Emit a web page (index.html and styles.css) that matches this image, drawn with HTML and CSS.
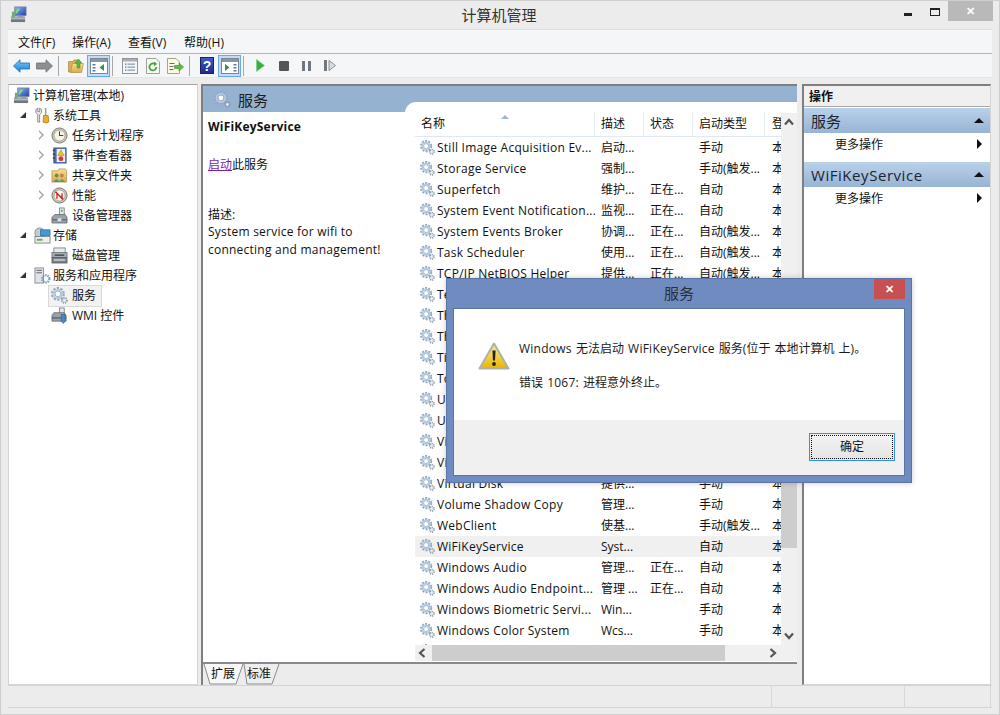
FILE: index.html
```html
<!DOCTYPE html>
<html lang="zh-CN">
<head>
<meta charset="utf-8">
<title>计算机管理</title>
<link rel="stylesheet" href="styles.css">
</head>
<body>
<svg class="defs" width="0" height="0">
  <defs>
    <linearGradient id="gScreen" x1="0" y1="0" x2="1" y2="1"><stop offset="0" stop-color="#8fb8f0"/><stop offset="1" stop-color="#1f3fb0"/></linearGradient>
    <linearGradient id="gFolder" x1="0" y1="0" x2="0" y2="1"><stop offset="0" stop-color="#f8df90"/><stop offset="1" stop-color="#dca94a"/></linearGradient>
    <linearGradient id="gArrow" x1="0" y1="0" x2="0" y2="1"><stop offset="0" stop-color="#7cc6f5"/><stop offset="1" stop-color="#1f7fd6"/></linearGradient>
    <linearGradient id="gWarn" x1="0" y1="0" x2="0" y2="1"><stop offset="0" stop-color="#fdf08a"/><stop offset="1" stop-color="#e9b400"/></linearGradient>
    <linearGradient id="gHelp" x1="0" y1="0" x2="0" y2="1"><stop offset="0" stop-color="#3f5cc8"/><stop offset="1" stop-color="#1d2c8c"/></linearGradient>
    <symbol id="gear" viewBox="0 0 16 16">
      <circle cx="6.5" cy="6.5" r="5.2" fill="none" stroke="#8fa9c4" stroke-width="2.6" stroke-dasharray="2 1.27"/>
      <circle cx="6.5" cy="6.5" r="4" fill="none" stroke="#b7cadd" stroke-width="1.8"/>
      <circle cx="6.5" cy="6.5" r="2.7" fill="#fff" stroke="#7f9ab6" stroke-width=".7"/>
      <circle cx="12.6" cy="12.6" r="2.4" fill="none" stroke="#8a9cb0" stroke-width="1.6" stroke-dasharray="1.2 .8"/>
      <circle cx="12.6" cy="12.6" r="1.2" fill="#fff" stroke="#a5b5c5" stroke-width=".5"/>
    </symbol>
    <symbol id="computer" viewBox="0 0 18 18">
      <rect x="5" y="1" width="12" height="9" fill="url(#gScreen)" stroke="#6a7a90" stroke-width=".8"/>
      <path d="M6 9 L11 3 L8 3 L6 6Z" fill="#7fe07f"/>
      <rect x="8" y="10" width="6" height="2" fill="#8c95a0"/>
      <rect x="1" y="11" width="15" height="2.5" fill="#9aa3ac"/>
      <rect x="1" y="14" width="15" height="3" fill="#6f7780"/>
      <rect x="2" y="6" width="3" height="6" fill="#6fae6f"/>
    </symbol>
    <symbol id="tools" viewBox="0 0 16 18">
      <path d="M3 1 L3 5 L5 5 L5 1 L7 3 L7 6 L5 8 L5 16 L3 16 L3 8 L1 6 L1 3Z" fill="#eef0f2" stroke="#6a6a6a" stroke-width=".8"/>
      <rect x="10.5" y="1" width="1.6" height="8" fill="#9a9a9a"/>
      <path d="M9 9 h5 l.6 7 q-3 2 -6 0Z" fill="#eeb020" stroke="#9a6c10" stroke-width=".7"/>
    </symbol>
    <symbol id="clock" viewBox="0 0 18 18">
      <circle cx="9" cy="9" r="8" fill="#c9c5b8" stroke="#7a7a70"/>
      <circle cx="9" cy="9" r="5.8" fill="#f8f4e4" stroke="#8a8a80" stroke-width=".6"/>
      <path d="M9 4.5 V9 H13" fill="none" stroke="#444" stroke-width="1.1"/>
    </symbol>
    <symbol id="event" viewBox="0 0 16 18">
      <rect x="2" y="1" width="13" height="16" fill="#4a6fae" stroke="#2c4680" stroke-width=".8"/>
      <rect x="5" y="2" width="9" height="14" fill="#eef2f8"/>
      <rect x="1" y="3" width="2" height="1.4" fill="#333"/><rect x="1" y="7" width="2" height="1.4" fill="#333"/><rect x="1" y="11" width="2" height="1.4" fill="#333"/>
      <path d="M9.5 3 L13 9 H6Z" fill="#f0c020" stroke="#a07c10" stroke-width=".5"/>
      <circle cx="9.5" cy="12.5" r="2.6" fill="#d83838"/>
    </symbol>
    <symbol id="share" viewBox="0 0 18 18">
      <path d="M1 4 H7 L8.500 2 H15 L16.500 4 V16 H1Z" fill="url(#gFolder)" stroke="#a98a40" stroke-width=".7"/>
      <circle cx="6" cy="9" r="2" fill="#5f8f50"/><path d="M2.500 16 Q6 10 9 16Z" fill="#3f8fb0"/>
      <circle cx="11.500" cy="9" r="2" fill="#c08050"/><path d="M8.500 16 Q11.500 10 15 16Z" fill="#60a050"/>
    </symbol>
    <symbol id="perf" viewBox="0 0 18 18">
      <circle cx="9" cy="9" r="8" fill="#c8c4b8" stroke="#77756c"/>
      <circle cx="9" cy="9" r="5.800" fill="#faf6ee" stroke="#8a887e" stroke-width=".6"/>
      <path d="M4.500 5 L13 13 M6.300 12.500 V6.500 L11.700 12.500 V6.500" fill="none" stroke="#c82828" stroke-width="1.400"/>
    </symbol>
    <symbol id="devmgr" viewBox="0 0 18 18">
      <rect x="9" y="1" width="5" height="8" fill="#e4e8ec" stroke="#6c7278" stroke-width=".8"/>
      <rect x="10.500" y="3" width="2" height="2" fill="#5fb35f"/>
      <path d="M4 8 H15 L17 11 V17 H1 V11Z" fill="#9aa2aa" stroke="#50565c" stroke-width=".7"/>
      <rect x="1" y="13" width="16" height="1.200" fill="#5a6068"/>
      <rect x="7" y="12" width="4" height="3" fill="#dfe3e6"/>
    </symbol>
    <symbol id="storage" viewBox="0 0 18 18">
      <rect x="1" y="1" width="10" height="11" rx="5" fill="#c6ccd2" stroke="#70767c" stroke-width=".8"/>
      <rect x="7" y="3" width="10" height="6" fill="#3f9ad8" stroke="#26628c" stroke-width=".7"/>
      <rect x="1" y="10" width="16" height="7" fill="#eceef0" stroke="#686e74" stroke-width=".8"/>
      <rect x="3" y="12.500" width="6" height="2" fill="#5aaf4e"/>
    </symbol>
    <symbol id="disk" viewBox="0 0 18 18">
      <rect x="3" y="1" width="12" height="6" fill="#e8eaec" stroke="#6c7278" stroke-width=".8"/>
      <rect x="1" y="6" width="16" height="5" fill="#a4abb2" stroke="#5a6068" stroke-width=".7"/>
      <rect x="4" y="8" width="10" height="1.200" fill="#2e3236"/>
      <rect x="1" y="11" width="16" height="6" fill="#787f86" stroke="#50565c" stroke-width=".7"/>
      <rect x="3" y="13" width="12" height="1.500" fill="#d5d8db"/>
    </symbol>
    <symbol id="services" viewBox="0 0 18 18">
      <rect x="1" y="1" width="9" height="16" fill="#dfe3e8" stroke="#70767c" stroke-width=".8"/>
      <rect x="2.500" y="3" width="6" height="1.200" fill="#70767c"/><rect x="2.500" y="5.500" width="6" height="1.200" fill="#70767c"/>
      <circle cx="12.500" cy="12.500" r="3.800" fill="none" stroke="#6f95b8" stroke-width="2.200" stroke-dasharray="1.500 .9"/>
      <circle cx="12.500" cy="12.500" r="1.500" fill="#fff"/>
    </symbol>
    <symbol id="wmi" viewBox="0 0 18 18">
      <rect x="9" y="1" width="5" height="6" fill="#e4e8ec" stroke="#6c7278" stroke-width=".8"/>
      <path d="M3 6 H14 L16 9 V15 H1 V9Z" fill="#98a0a8" stroke="#50565c" stroke-width=".7"/>
      <rect x="1" y="11" width="15" height="1.200" fill="#505660"/>
      <path d="M11 8 H15 V15 L13 17.500 L11 15Z" fill="#4c88c8" stroke="#2a5a90" stroke-width=".6"/>
    </symbol>
    <symbol id="winPane" viewBox="0 0 18 16">
      <rect x=".5" y=".5" width="17" height="15" fill="#fff" stroke="#7a8694"/>
      <rect x="1" y="1" width="16" height="3" fill="#8a96a4"/>
    </symbol>
  </defs>
</svg>

<div class="win">
  <header class="titlebar">
    <svg class="app-ico"><use href="#computer"/></svg>
    <span class="title">计算机管理</span>
    <div class="caption">
      <span class="cap-min"></span>
      <span class="cap-max"></span>
      <span class="cap-close">✕</span>
    </div>
  </header>

  <nav class="menubar">
    <span class="menu-item">文件(F)</span>
    <span class="menu-item">操作(A)</span>
    <span class="menu-item">查看(V)</span>
    <span class="menu-item">帮助(H)</span>
  </nav>

  <div class="toolbar">
    <span class="tb"><svg width="17" height="14" viewBox="0 0 17 14"><path d="M0.500 7 L7 .8 V4 H16.500 V10 H7 V13.200Z" fill="url(#gArrow)" stroke="#1c6fbb" stroke-width=".8"/></svg></span>
    <span class="tb"><svg width="17" height="14" viewBox="0 0 17 14"><path d="M16.500 7 L10 .8 V4 H.5 V10 H10 V13.200Z" fill="#8f8f8f" stroke="#707070" stroke-width=".8"/></svg></span>
    <span class="sep"></span>
    <span class="tb"><svg width="16" height="15" viewBox="0 0 16 15"><path d="M.5 3.500 H5 L6 2 H10 V14 H.5Z" fill="#d8ae58" stroke="#a07c30" stroke-width=".6"/><path d="M2.500 14.500 L4.500 5.500 H15.500 L13.500 14.500Z" fill="url(#gFolder)" stroke="#a98a40" stroke-width=".6"/><path d="M9 10 V5 H7.300 L10.500 1 L13.700 5 H12 V10Z" fill="#58b84c" stroke="#2f8a2a" stroke-width=".5"/></svg></span>
    <span class="tb tb-on"><svg width="18" height="16" viewBox="0 0 18 16"><use href="#winPane"/><rect x="2.500" y="6" width="3" height="1.500" fill="#4f7fae"/><rect x="2.500" y="9" width="3" height="1.500" fill="#4f7fae"/><rect x="2.500" y="12" width="3" height="1.500" fill="#4f7fae"/><path d="M14 6 V13 L9.500 9.500Z" fill="#2f9a3a"/></svg></span>
    <span class="sep"></span>
    <span class="tb"><svg width="16" height="16" viewBox="0 0 16 16"><rect x=".5" y=".5" width="15" height="15" fill="#f4f5f6" stroke="#8f959c"/><rect x="1" y="1" width="14" height="2.500" fill="#a8aeb5"/><rect x="3" y="5.500" width="1.500" height="1.300" fill="#5f7f9f"/><rect x="5.500" y="5.500" width="7.500" height="1.300" fill="#8fa0b0"/><rect x="3" y="8.500" width="1.500" height="1.300" fill="#5f7f9f"/><rect x="5.500" y="8.500" width="7.500" height="1.300" fill="#8fa0b0"/><rect x="3" y="11.500" width="1.500" height="1.300" fill="#5f7f9f"/><rect x="5.500" y="11.500" width="7.500" height="1.300" fill="#8fa0b0"/></svg></span>
    <span class="tb"><svg width="14" height="16" viewBox="0 0 14 16"><path d="M.5 .5 H10 L13.500 4 V15.500 H.5Z" fill="#f8f8f4" stroke="#a0a098"/><path d="M10.400 9 A3.500 3.500 0 1 1 8.800 6" fill="none" stroke="#3fa83a" stroke-width="1.800"/><path d="M8 3.600 L11.200 6 L8 8.200Z" fill="#3fa83a"/></svg></span>
    <span class="tb"><svg width="17" height="16" viewBox="0 0 17 16"><path d="M.5 .5 H9 L12.500 4 V15.500 H.5Z" fill="#fbf8e4" stroke="#a8a488"/><rect x="2.500" y="5" width="5" height="1" fill="#6a6a6a"/><rect x="2.500" y="8" width="4" height="1" fill="#6a6a6a"/><rect x="2.500" y="11" width="4" height="1" fill="#6a6a6a"/><path d="M7.500 7.500 H12 V5 L16.500 9 L12 13 V10.500 H7.500Z" fill="#62b848" stroke="#3f8a30" stroke-width=".6"/></svg></span>
    <span class="sep"></span>
    <span class="tb"><svg width="14" height="17" viewBox="0 0 14 17"><rect x=".5" y=".5" width="13" height="16" fill="url(#gHelp)" stroke="#16245f"/><text x="7" y="13.500" text-anchor="middle" class="help-q">?</text></svg></span>
    <span class="tb tb-on"><svg width="18" height="16" viewBox="0 0 18 16"><use href="#winPane"/><rect x="12.500" y="6" width="3" height="1.500" fill="#4f7fae"/><rect x="12.500" y="9" width="3" height="1.500" fill="#4f7fae"/><rect x="12.500" y="12" width="3" height="1.500" fill="#4f7fae"/><path d="M4 6 V13 L8.500 9.500Z" fill="#2f9a3a"/></svg></span>
    <span class="sep"></span>
    <span class="tb"><svg width="9" height="13" viewBox="0 0 9 13"><path d="M.5 .5 L8.500 6.500 L.5 12.500Z" fill="#34b03c" stroke="#7fc68a" stroke-width=".6"/></svg></span>
    <span class="tb"><svg width="10" height="10" viewBox="0 0 10 10"><rect width="10" height="10" rx="1" fill="#555"/></svg></span>
    <span class="tb"><svg width="9" height="10" viewBox="0 0 9 10"><rect width="3" height="10" fill="#6f7880"/><rect x="6" width="3" height="10" fill="#6f7880"/></svg></span>
    <span class="tb"><svg width="12" height="11" viewBox="0 0 12 11"><rect y="0" width="3" height="11" fill="#6f7880"/><path d="M5 .5 L11.500 5.500 L5 10.500Z" fill="#d9dcdf" stroke="#777" stroke-width=".8"/></svg></span>
  </div>

  <main class="panes">
    <aside class="tree">
      <div class="node lvl0"><svg class="ico"><use href="#computer"/></svg><span>计算机管理(本地)</span></div>
      <div class="node lvl1"><i class="tw tw-open"></i><svg class="ico"><use href="#tools"/></svg><span>系统工具</span></div>
      <div class="node lvl2"><i class="tw tw-closed"></i><svg class="ico"><use href="#clock"/></svg><span>任务计划程序</span></div>
      <div class="node lvl2"><i class="tw tw-closed"></i><svg class="ico"><use href="#event"/></svg><span>事件查看器</span></div>
      <div class="node lvl2"><i class="tw tw-closed"></i><svg class="ico"><use href="#share"/></svg><span>共享文件夹</span></div>
      <div class="node lvl2"><i class="tw tw-closed"></i><svg class="ico"><use href="#perf"/></svg><span>性能</span></div>
      <div class="node lvl2"><i class="tw"></i><svg class="ico"><use href="#devmgr"/></svg><span>设备管理器</span></div>
      <div class="node lvl1"><i class="tw tw-open"></i><svg class="ico"><use href="#storage"/></svg><span>存储</span></div>
      <div class="node lvl2"><i class="tw"></i><svg class="ico"><use href="#disk"/></svg><span>磁盘管理</span></div>
      <div class="node lvl1"><i class="tw tw-open"></i><svg class="ico"><use href="#services"/></svg><span>服务和应用程序</span></div>
      <div class="node lvl2 node-sel"><i class="tw"></i><svg class="ico"><use href="#gear"/></svg><span>服务</span></div>
      <div class="node lvl2"><i class="tw"></i><svg class="ico"><use href="#wmi"/></svg><span>WMI 控件</span></div>
    </aside>

    <section class="center">
      <div class="center-head"><svg class="ico"><use href="#gear"/></svg><span>服务</span></div>
      <div class="center-body">
        <div class="detail">
          <p class="svc-name">WiFiKeyService</p>
          <p class="svc-action"><a class="svc-link">启动</a>此服务</p>
          <p class="svc-label">描述:</p>
          <p class="svc-desc">System service for wifi to<br>connecting and management!</p>
        </div>
        <div class="listwrap">
          <div class="listcol">
            <div class="listarea">
              <div class="row head">
                <span class="c">名称<i class="sort"></i></span><span class="c">描述</span><span class="c">状态</span><span class="c">启动类型</span><span class="c">登录为</span>
              </div>
              <div class="rows">
                <div class="row"><span class="c n"><svg class="g"><use href="#gear"/></svg>Still Image Acquisition Ev...</span><span class="c">启动...</span><span class="c"></span><span class="c">手动</span><span class="c">本地服务</span></div>
                <div class="row"><span class="c n"><svg class="g"><use href="#gear"/></svg>Storage Service</span><span class="c">强制...</span><span class="c"></span><span class="c">手动(触发...</span><span class="c">本地系统</span></div>
                <div class="row"><span class="c n"><svg class="g"><use href="#gear"/></svg>Superfetch</span><span class="c">维护...</span><span class="c">正在...</span><span class="c">自动</span><span class="c">本地系统</span></div>
                <div class="row"><span class="c n"><svg class="g"><use href="#gear"/></svg>System Event Notification...</span><span class="c">监视...</span><span class="c">正在...</span><span class="c">自动</span><span class="c">本地系统</span></div>
                <div class="row"><span class="c n"><svg class="g"><use href="#gear"/></svg>System Events Broker</span><span class="c">协调...</span><span class="c">正在...</span><span class="c">自动(触发...</span><span class="c">本地系统</span></div>
                <div class="row"><span class="c n"><svg class="g"><use href="#gear"/></svg>Task Scheduler</span><span class="c">使用...</span><span class="c">正在...</span><span class="c">自动(触发...</span><span class="c">本地系统</span></div>
                <div class="row"><span class="c n"><svg class="g"><use href="#gear"/></svg>TCP/IP NetBIOS Helper</span><span class="c">提供...</span><span class="c">正在...</span><span class="c">自动(触发...</span><span class="c">本地服务</span></div>
                <div class="row"><span class="c n"><svg class="g"><use href="#gear"/></svg>Telephony</span><span class="c"></span><span class="c"></span><span class="c"></span><span class="c"></span></div>
                <div class="row"><span class="c n"><svg class="g"><use href="#gear"/></svg>Themes</span><span class="c"></span><span class="c"></span><span class="c"></span><span class="c"></span></div>
                <div class="row"><span class="c n"><svg class="g"><use href="#gear"/></svg>Thread Ordering Server</span><span class="c"></span><span class="c"></span><span class="c"></span><span class="c"></span></div>
                <div class="row"><span class="c n"><svg class="g"><use href="#gear"/></svg>Time Broker</span><span class="c"></span><span class="c"></span><span class="c"></span><span class="c"></span></div>
                <div class="row"><span class="c n"><svg class="g"><use href="#gear"/></svg>Touch Keyboard</span><span class="c"></span><span class="c"></span><span class="c"></span><span class="c"></span></div>
                <div class="row"><span class="c n"><svg class="g"><use href="#gear"/></svg>UPnP Device Host</span><span class="c"></span><span class="c"></span><span class="c"></span><span class="c"></span></div>
                <div class="row"><span class="c n"><svg class="g"><use href="#gear"/></svg>User Profile Service</span><span class="c"></span><span class="c"></span><span class="c"></span><span class="c"></span></div>
                <div class="row"><span class="c n"><svg class="g"><use href="#gear"/></svg>Virtual Machine Service</span><span class="c"></span><span class="c"></span><span class="c"></span><span class="c"></span></div>
                <div class="row"><span class="c n"><svg class="g"><use href="#gear"/></svg>Virtual Network Service</span><span class="c"></span><span class="c"></span><span class="c"></span><span class="c"></span></div>
                <div class="row"><span class="c n"><svg class="g"><use href="#gear"/></svg>Virtual Disk</span><span class="c">提供...</span><span class="c"></span><span class="c">手动</span><span class="c">本地系统</span></div>
                <div class="row"><span class="c n"><svg class="g"><use href="#gear"/></svg>Volume Shadow Copy</span><span class="c">管理...</span><span class="c"></span><span class="c">手动</span><span class="c">本地系统</span></div>
                <div class="row"><span class="c n"><svg class="g"><use href="#gear"/></svg>WebClient</span><span class="c">使基...</span><span class="c"></span><span class="c">手动(触发...</span><span class="c">本地服务</span></div>
                <div class="row row-sel"><span class="c n"><svg class="g"><use href="#gear"/></svg>WiFiKeyService</span><span class="c">Syst...</span><span class="c"></span><span class="c">自动</span><span class="c">本地系统</span></div>
                <div class="row"><span class="c n"><svg class="g"><use href="#gear"/></svg>Windows Audio</span><span class="c">管理...</span><span class="c">正在...</span><span class="c">自动</span><span class="c">本地服务</span></div>
                <div class="row"><span class="c n"><svg class="g"><use href="#gear"/></svg>Windows Audio Endpoint...</span><span class="c">管理 ...</span><span class="c">正在...</span><span class="c">自动</span><span class="c">本地系统</span></div>
                <div class="row"><span class="c n"><svg class="g"><use href="#gear"/></svg>Windows Biometric Servi...</span><span class="c">Win...</span><span class="c"></span><span class="c">手动</span><span class="c">本地系统</span></div>
                <div class="row"><span class="c n"><svg class="g"><use href="#gear"/></svg>Windows Color System</span><span class="c">Wcs...</span><span class="c"></span><span class="c">手动</span><span class="c">本地服务</span></div>
                <div class="row"><span class="c n"><svg class="g"><use href="#gear"/></svg>Windows Connect Now</span><span class="c">WC...</span><span class="c"></span><span class="c">手动</span><span class="c">本地服务</span></div>
              </div>
            </div>
            <div class="hbar">
              <svg class="arrow" width="8" height="10" viewBox="0 0 8 10"><path d="M6.500 1 L2 5 L6.500 9" fill="none" stroke="#555" stroke-width="2.200"/></svg>
              <span class="hthumb"></span>
              <svg class="arrow" width="8" height="10" viewBox="0 0 8 10"><path d="M1.500 1 L6 5 L1.500 9" fill="none" stroke="#555" stroke-width="2.200"/></svg>
            </div>
          </div>
          <div class="vbar">
            <svg class="arrow" width="10" height="8" viewBox="0 0 10 8"><path d="M1 6.500 L5 2 L9 6.500" fill="none" stroke="#555" stroke-width="2.200"/></svg>
            <span class="vthumb"></span>
            <svg class="arrow" width="10" height="8" viewBox="0 0 10 8"><path d="M1 1.500 L5 6 L9 1.500" fill="none" stroke="#555" stroke-width="2.200"/></svg>
          </div>
        </div>
      </div>
      <div class="tabs">
        <div class="tab tab-on"><svg class="tab-shape" width="44" height="21" viewBox="0 0 44 21"><path d="M1 0 L7 20 H33 L40 0" fill="#f8f8f8" stroke="#8a8a8a"/></svg><span>扩展</span></div>
        <div class="tab"><svg class="tab-shape" width="38" height="21" viewBox="0 0 38 21"><path d="M1 0 L4 20 H29 L36 0" fill="#eeeeee" stroke="#8a8a8a"/></svg><span>标准</span></div>
      </div>
    </section>

    <aside class="actions">
      <div class="act-head">操作</div>
      <div class="act-group">
        <div class="act-title"><span>服务</span><i class="collapse"></i></div>
        <div class="act-item"><span>更多操作</span><i class="more"></i></div>
      </div>
      <div class="act-group">
        <div class="act-title"><span class="act-lat">WiFiKeyService</span><i class="collapse"></i></div>
        <div class="act-item"><span>更多操作</span><i class="more"></i></div>
      </div>
    </aside>
  </main>

  <footer class="status">
    <span class="st st-a"></span><span class="st st-b"></span><span class="st st-c"></span>
  </footer>

  <div class="dialog">
    <div class="dlg-title"><span>服务</span><span class="dlg-close">✕</span></div>
    <div class="dlg-inner">
      <div class="dlg-msg">
        <svg class="warn" width="32" height="28" viewBox="0 0 32 28"><path d="M16 1.500 L30.500 26.500 H1.500Z" fill="url(#gWarn)" stroke="#b0b0a8" stroke-width="2" stroke-linejoin="round"/><path d="M14.400 8.500 H17.600 L17 18.500 H15Z" fill="#222"/><circle cx="16" cy="22" r="1.900" fill="#222"/></svg>
        <div class="dlg-text">
          <p><span class="lat">Windows</span> 无法启动 <span class="lat">WiFiKeyService</span> 服务(位于 本地计算机 上)。</p>
          <p>错误 <span class="lat">1067:</span> 进程意外终止。</p>
        </div>
      </div>
      <div class="dlg-foot"><button class="ok"><span>确定</span></button></div>
    </div>
  </div>
</div>
</body>
</html>
```

FILE: styles.css
```css
* { box-sizing: border-box; }
html, body { margin: 0; padding: 0; }
body {
  width: 1000px;
  height: 715px;
  overflow: hidden;
  background: #ececec;
  font-family: "Open Sans", "Noto Sans CJK SC", sans-serif;
  font-size: 12px;
  color: #111;
}
.defs { position: absolute; }
.win {
  position: relative;
  width: 1000px;
  height: 715px;
  padding: 0 7px 6px 7px;
  display: flex;
  flex-direction: column;
  background: #ececec;
  border: 1px solid #cfcfcf;
}

/* title bar */
.titlebar {
  height: 28px;
  padding: 0 2px 2px 0;
  display: flex;
  align-items: center;
  justify-content: center;
  position: relative;
  flex: none;
}
.app-ico { position: absolute; left: 2px; top: 5px; width: 17px; height: 17px; }
.title { font-size: 15px; color: #333; }
.caption { position: absolute; right: -1px; top: 0; display: flex; align-items: flex-start; }
.cap-min { width: 8px; height: 3px; background: #222; margin: 12px 18px 0 0; }
.cap-max { width: 10px; height: 8px; border: 1px solid #222; border-top-width: 2px; margin: 7px 8px 0 0; }
.cap-close {
  width: 45px; height: 20px; background: #b9b9b9; color: #fff;
  font-size: 11px; line-height: 20px; text-align: center; font-weight: bold;
}

/* menu */
.menubar {
  height: 25px;
  flex: none;
  display: flex;
  align-items: center;
  padding: 0 0 0 10px;
  background: #f5f6f7;
  border-top: 1px solid #e0e0e0;
  border-bottom: 1px solid #b4b4b4;
}
.menu-item { width: 56px; flex: none; white-space: nowrap; }
.menu-item:first-child { width: 54px; }
.toolbar {
  height: 24px;
  flex: none;
  display: flex;
  align-items: center;
  padding-left: 2px;
  background: #f5f6f7;
  border-bottom: 1px solid #e6e6e6;
}
.tb { width: 23px; height: 22px; flex: none; display: flex; align-items: center; justify-content: center; }
.tb-on { background: #c4dcf4; border: 1px solid #6aa8e6; }
.sep { width: 1px; height: 20px; background: #a8a8a8; margin: 0 5px 0 2px; flex: none; }
.help-q { fill: #fff; font: bold 14px "Liberation Sans", sans-serif; }

/* panes */
.panes {
  flex: 1;
  display: flex;
  margin-top: 6px;
  min-height: 0;
}
.tree {
  width: 190px;
  flex: none;
  background: #fff;
  border: 1px solid #d4d4d4;
  border-top: 1px solid #a4a4a4;
}
.node {
  height: 20px;
  display: flex;
  align-items: center;
  white-space: nowrap;
}
.node .ico { width: 17px; height: 17px; flex: none; }
.lvl0 { padding-left: 4px; gap: 3px; }
.lvl1 { padding-left: 10px; }
.lvl1 .tw { width: 15px; }
.lvl1 .ico { margin-right: 2px; }
.lvl2 { padding-left: 28px; }
.lvl2 .tw { width: 14px; }
.lvl2 .ico { margin-right: 4px; }
.tw { display: block; flex: none; height: 10px; position: relative; }
.tw-open::before {
  content: ""; position: absolute; left: 1px; top: 2px; width: 0; height: 0;
  border-style: solid; border-width: 0 0 6px 6px; border-color: transparent transparent #333 transparent;
}
.tw-closed::before {
  content: ""; position: absolute; left: 2px; top: 0; width: 0; height: 0;
  border-style: solid; border-width: 5px 0 5px 5px; border-color: transparent transparent transparent #a6a6a6;
}
.tw-closed::after {
  content: ""; position: absolute; left: 2px; top: 2px; width: 0; height: 0;
  border-style: solid; border-width: 3px 0 3px 3px; border-color: transparent transparent transparent #fff;
}
.node-sel { position: relative; z-index: 0; }
.node-sel::before {
  content: ""; position: absolute; left: 39px; top: 0; width: 52px; height: 20px;
  background: #f2f2f2; border: 1px solid #d9d9d9; z-index: -1;
}

/* center */
.center {
  width: 596px;
  flex: none;
  margin-left: 3px;
  display: flex;
  flex-direction: column;
  border-left: 2px solid #7f7f7f;
  border-top: 2px solid #7f7f7f;
  background: #fff;
}
.center-head {
  height: 26px;
  flex: none;
  background: #96b2d1;
  display: flex;
  align-items: center;
  font-size: 15px;
  padding-left: 11px;
  gap: 7px;
  color: #1c1c1c;
}
.center-head .ico { width: 17px; height: 17px; }
.center-body {
  flex: 1;
  display: flex;
  min-height: 0;
  border-bottom: 2px solid #8a8a8a;
}
.detail { width: 202px; flex: none; padding: 6px 0 0 5px; }
.detail p { margin: 0; line-height: 17px; }
.svc-name { font-weight: 700; letter-spacing: .2px; }
.svc-action { margin-top: 21px !important; }
.svc-link { color: #7b1fa2; text-decoration: underline; }
.svc-label { margin-top: 34px !important; line-height: 16px !important; }
.svc-desc { line-height: 18px !important; letter-spacing: .23px; }
.listwrap {
  flex: 1;
  min-width: 0;
  margin-top: -10px;
  background: #fff;
  border-top-left-radius: 11px;
  padding: 10px 0 1px 10px;
  display: flex;
  position: relative;
}
.listcol { flex: 1; min-width: 0; display: flex; flex-direction: column; }
.listarea { flex: 1; min-height: 0; overflow: hidden; }
.row {
  display: grid;
  grid-template-columns: 180px 49px 49px 72px 16px;
  height: 21px;
  align-items: center;
}
.row .c { padding-left: 6px; white-space: nowrap; overflow: hidden; display: block; line-height: 21px; }
.row .c:last-child { padding-left: 7px; }
.row .n { padding-left: 5px; display: flex; align-items: center; gap: 2px; letter-spacing: .25px; }
.g { width: 15px; height: 15px; flex: none; }
.head { height: 25px; border-bottom: 1px solid #dfe8f5; }
.head .c { line-height: 24px; border-right: 1px solid #e4ecf6; position: relative; }
.head .c:last-child { border-right: 0; }
.sort {
  position: absolute; left: 86px; top: 3px; width: 0; height: 0;
  border-style: solid; border-width: 0 4px 4px 4px; border-color: transparent transparent #9db8d2 transparent;
}
.row-sel { background: #f0f0f0; }
.hbar {
  height: 16px; flex: none; background: #f0f0f0;
  display: flex; align-items: center; padding: 0 4px 0 3px; gap: 6px;
}
.hthumb { width: 293px; height: 16px; background: #cdcdcd; margin-right: auto; }
.vbar {
  width: 16px; flex: none; background: #f0f0f0;
  display: flex; flex-direction: column; align-items: center; margin-top: 1px;
  padding: 5px 0 21px;
}
.vthumb { width: 16px; height: 148px; background: #cdcdcd; margin: auto 0 84px; }

/* tabs */
.tabs { height: 21px; flex: none; display: flex; background: #ececec; }
.tab { position: relative; width: 40px; height: 21px; text-align: center; line-height: 20px; }
.tab + .tab { width: 32px; }
.tab span { position: relative; }
.tab-shape { position: absolute; left: 0; top: 0; }

/* actions */
.actions {
  width: 189px;
  flex: none;
  margin-left: 5px;
  background: #fff;
  border-left: 2px solid #7f7f7f;
  border-top: 2px solid #7f7f7f;
  border-right: 1px solid #d4d4d4;
  border-bottom: 1px solid #d4d4d4;
}
.act-head {
  height: 21px;
  line-height: 21px;
  padding-left: 5px;
  font-weight: 700;
  background: #f0f0f0;
  border-bottom: 1px solid #a8a8a8;
  margin-bottom: 1px;
}
.act-group { padding-bottom: 7px; }
.act-title {
  height: 25px;
  display: flex;
  align-items: center;
  justify-content: space-between;
  padding: 0 6px 0 7px;
  background: linear-gradient(#b9d1ea, #98b4d4);
  font-size: 15px;
  color: #1c2430;
}
.act-lat { letter-spacing: .55px; }
.collapse { width: 0; height: 0; border-style: solid; border-width: 0 5px 5px 5px; border-color: transparent transparent #111 transparent; }
.act-item {
  height: 22px;
  display: flex;
  align-items: center;
  justify-content: space-between;
  padding: 0 6px 0 31px;
}
.more { width: 0; height: 0; border-style: solid; border-width: 5px 0 5px 5px; border-color: transparent transparent transparent #111; margin-right: 2px; }

/* status */
.status {
  height: 23px;
  flex: none;
  display: flex;
  border-top: 1px solid #d4d4d4;
  border-bottom: 1px solid #d4d4d4;
}
.st { display: block; height: 100%; border-right: 1px solid #d8d8d8; }
.st-a { width: 764px; }
.st-b { width: 133px; }
.st-c { width: 86px; }

/* dialog */
.dialog {
  position: absolute;
  left: 445px;
  top: 277px;
  width: 466px;
  height: 205px;
  background: #6f8bbf;
  border: 1px solid #5a74a6;
  box-shadow: 0 0 6px rgba(0,0,0,.2);
  padding: 0 6px 6px;
  display: flex;
  flex-direction: column;
}
.dlg-title {
  height: 29px;
  flex: none;
  position: relative;
  text-align: center;
  font-size: 15px;
  line-height: 28px;
  color: #2a2f3a;
}
.dlg-close {
  position: absolute; right: 0; top: 0; width: 31px; height: 20px;
  background: #c75050; color: #fff; font-size: 11px; line-height: 20px; font-weight: bold;
}
.dlg-inner {
  flex: 1;
  display: flex;
  flex-direction: column;
  background: #fff;
  border: 1px solid #5a74a6;
}
.dlg-msg { height: 111px; flex: none; display: flex; padding: 33px 0 0 24px; gap: 9px; }
.warn { flex: none; }
.dlg-text { margin-top: -2px; }
.dlg-text p { margin: 0 0 17px; line-height: 17px; color: #1a1a1a; word-spacing: 1px; white-space: nowrap; }
.lat { letter-spacing: .25px; }
.dlg-foot {
  flex: 1;
  background: #f0f0f0;
  display: flex;
  justify-content: flex-end;
  align-items: flex-start;
  padding: 13px 9px 0 0;
}
.ok {
  width: 86px; height: 28px;
  border: 1px solid #2f92e6;
  background: linear-gradient(#f3f3f3, #e4e4e4);
  padding: 1px;
  font: inherit;
  color: #111;
}
.ok span { display: block; height: 100%; line-height: 22px; border: 1px dotted #111; }
```
